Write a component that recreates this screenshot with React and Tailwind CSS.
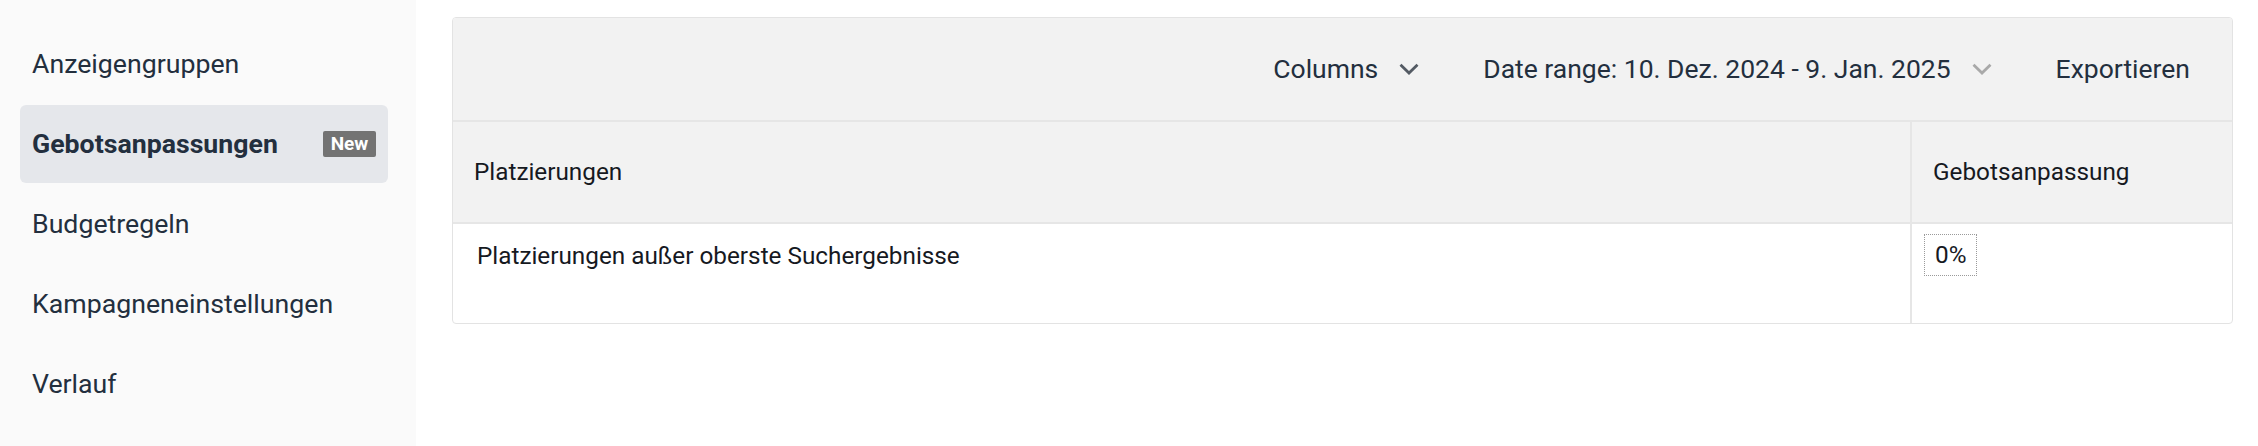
const NAV = [
  { label: "Anzeigengruppen" },
  { label: "Gebotsanpassungen", active: true, badge: "New" },
  { label: "Budgetregeln" },
  { label: "Kampagneneinstellungen" },
  { label: "Verlauf" },
];

function Sidebar() {
  return (
    <aside className="w-[416px] shrink-0 bg-[#fafafa] pt-[25px] pl-[20px] pr-[28px] flex flex-col gap-[2px]">
      {NAV.map((item) => (
        <div
          key={item.label}
          className={
            item.active
              ? "h-[78px] flex items-center justify-between pl-[12px] pr-[12px] rounded-[6px] bg-[#e5e7eb] font-bold"
              : "h-[78px] flex items-center pl-[12px] pr-[12px]"
          }
        >
          <span className="text-[26.7px] text-[#232f3e]">{item.label}</span>
          {item.badge && (
            <span className="h-[26px] w-[53px] flex items-center justify-center rounded-[2px] bg-[#737373] text-white text-[19px] font-bold">
              {item.badge}
            </span>
          )}
        </div>
      ))}
    </aside>
  );
}

// breiter Chevron wie im Original
function Caret({ muted }) {
  return (
    <svg
      width="20"
      height="12"
      viewBox="0 0 20 12"
      fill="none"
      className={muted ? "text-[#a9a9a9]" : "text-[#545b64]"}
    >
      <path
        d="M1.5 1.8 L10 10 L18.5 1.8"
        stroke="currentColor"
        strokeWidth="2.8"
        strokeLinejoin="miter"
      />
    </svg>
  );
}

function ToolbarButton({ label, muted }) {
  return (
    <button className="flex items-center gap-[21px] text-[26.5px] text-[#232f3e]">
      <span>{label}</span>
      <Caret muted={muted} />
    </button>
  );
}

export default function App() {
  return (
    <div
      className="flex h-[446px] w-full bg-white"
      style={{ fontFamily: 'Roboto, "Noto Sans", sans-serif' }}
    >
      <Sidebar />

      <main className="flex-1 pl-[36px] pr-[25px] pt-[17px]">
        <div className="border border-[#e3e3e3] rounded-[4px] overflow-hidden">
          {/* Toolbar */}
          <div className="h-[104px] bg-[#f2f2f2] border-b-2 border-[#e6e6e6] flex items-center justify-end gap-[64px] pr-[42px]">
            <ToolbarButton label="Columns" />
            <ToolbarButton label="Date range: 10. Dez. 2024 - 9. Jan. 2025" muted />
            <span className="text-[26.5px] text-[#232f3e]">Exportieren</span>
          </div>

          {/* Tabelle */}
          <div className="grid grid-cols-[1fr_322px] text-[24.3px] text-[#16191f]">
            <div className="h-[102px] bg-[#f2f2f2] border-b-2 border-[#e6e6e6] flex items-center pl-[21px]">
              Platzierungen
            </div>
            <div className="h-[102px] bg-[#f2f2f2] border-b-2 border-l-2 border-[#e6e6e6] flex items-center pl-[21px]">
              Gebotsanpassung
            </div>
            <div className="h-[99px] pl-[24px] pt-[14px]">
              Platzierungen außer oberste Suchergebnisse
            </div>
            <div className="h-[99px] border-l-2 border-[#e6e6e6] pl-[12px] pt-[10px]">
              <span className="inline-block border border-dotted border-[#9a9a9a] px-[10px] py-[2px]">
                0%
              </span>
            </div>
          </div>
        </div>
      </main>
    </div>
  );
}
